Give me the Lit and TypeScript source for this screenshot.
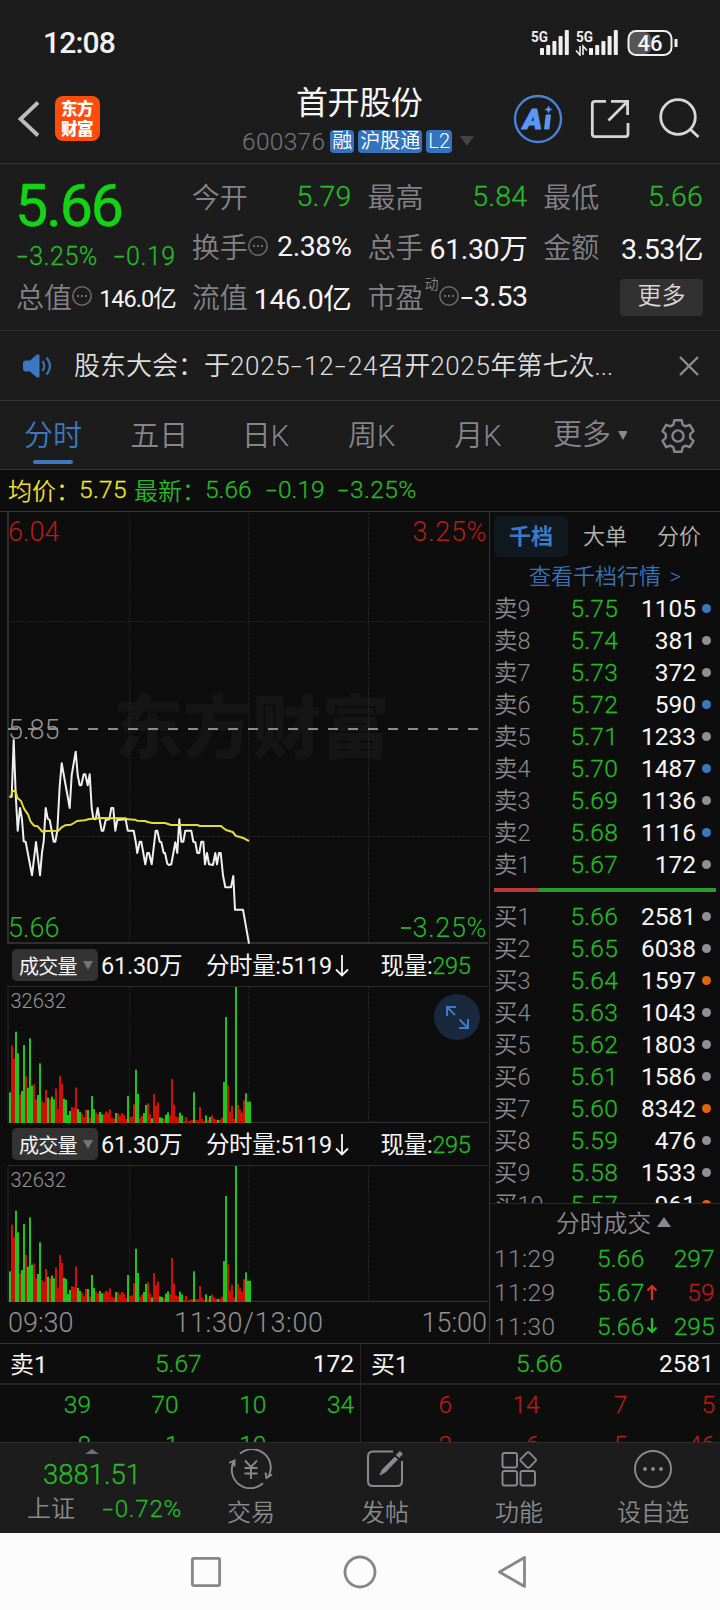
import { LitElement, html, svg, css } from "lit";
import { customElement, property } from "lit/decorators.js";

/** Splits a string so every minus sign can be drawn wide, as in the market data typeface. */
const num = (s: string) =>
  s.split("-").map((part, i) => (i === 0 ? part : html`<span class="hy">-</span>${part}`));

const shared = css`
  * { box-sizing: border-box; }
  .hy { display: inline-block; width: 0.53em; text-align: center; transform: scaleX(1.55); }
  .g { color: #26b926; -webkit-text-stroke: 0.3px currentColor; }
  .r { color: #b51c14; -webkit-text-stroke: 0.3px currentColor; }
  .w { color: #f6f6f6; font-weight: 400; }
  .w .g { font-weight: 350; }
  .y { color: #f0e030; }
  .d { color: #89898d; }
`;

type Level = [string, string, string, string];
const ASKS: Level[] = [
  ["卖9", "5.75", "1105", "blue"], ["卖8", "5.74", "381", "gray"], ["卖7", "5.73", "372", "gray"],
  ["卖6", "5.72", "590", "blue"], ["卖5", "5.71", "1233", "gray"], ["卖4", "5.70", "1487", "blue"],
  ["卖3", "5.69", "1136", "gray"], ["卖2", "5.68", "1116", "blue"], ["卖1", "5.67", "172", "gray"],
];
const BIDS: Level[] = [
  ["买1", "5.66", "2581", "gray"], ["买2", "5.65", "6038", "gray"], ["买3", "5.64", "1597", "orange"],
  ["买4", "5.63", "1043", "gray"], ["买5", "5.62", "1803", "gray"], ["买6", "5.61", "1586", "gray"],
  ["买7", "5.60", "8342", "orange"], ["买8", "5.59", "476", "gray"], ["买9", "5.58", "1533", "gray"],
  ["买10", "5.57", "961", "orange"],
];

/* Chart samples, in thirds of a pixel. */
const PRICE = [
  29,887,35,887,41,717,47,880,53,989,60,921,66,955,71,1021,77,1023,96,1123,108,1023,120,1123,126,1055,131,1021,
  137,921,143,953,149,957,155,989,161,1022,166,1022,172,989,179,855,185,787,209,921,215,822,227,752,233,822,
  239,853,244,853,251,820,256,820,263,853,269,820,275,921,280,953,287,955,293,921,299,957,305,989,310,989,
  317,957,328,955,334,921,340,921,346,989,352,957,377,955,383,989,401,989,407,1022,412,1056,419,1022,424,1022,
  436,1090,442,1056,447,1056,455,1090,467,989,472,989,479,1022,484,1024,491,1056,495,1056,502,1088,507,1092,
  514,1090,526,1024,532,1056,538,955,544,1022,550,1022,556,989,574,989,580,1022,586,1024,592,1056,598,1056,
  604,1022,610,1022,615,1090,621,1056,627,1090,639,1092,646,1056,651,1090,657,1056,662,1056,669,1123,676,1159,
  693,1159,700,1125,705,1226,729,1226,747,1328,
];
const AVG = [
  28,887,34,887,37,870,46,870,53,892,63,900,71,921,78,932,84,940,91,960,97,968,103,974,113,976,119,983,125,990,
  131,993,137,990,175,989,185,979,195,973,213,971,222,966,231,960,254,958,265,955,275,953,300,951,377,952,
  383,955,405,956,411,959,435,960,443,963,457,966,495,966,513,972,592,972,600,975,663,975,669,980,678,987,
  698,993,708,1005,723,1009,732,1012,747,1020,
];
/* Minute volumes: positive rose green, negative red. */
const VOLUME = [
  92,-232,-194,274,209,-86,96,234,-141,106,254,112,-116,-71,84,179,-66,-61,-99,76,-71,79,71,-104,-43,-141,-118,
  73,69,24,36,-48,-45,-106,42,33,-28,-18,-39,39,-16,81,42,-31,-26,33,26,-26,-34,-31,-41,-16,-13,30,-29,-22,-30,
  -25,-12,81,-18,-20,-56,160,87,-16,-22,30,54,-59,-26,14,-87,-51,-62,17,15,-12,25,32,-23,-132,-55,-19,-17,31,23,
  -6,-18,-5,-7,-9,92,-9,-8,-48,-13,-6,23,-10,18,-23,-13,-10,9,-10,-16,123,318,-113,-34,-52,-13,408,-54,-41,-31,
  -68,89,64,64,
];
const path = (a: number[]) => {
  let s = "";
  for (let i = 0; i < a.length; i += 2) s += `${(a[i] / 3).toFixed(1)},${(a[i + 1] / 3 - 11).toFixed(1)} `;
  return s;
};

@customElement("price-chart")
class PriceChart extends LitElement {
  static styles = css`
    :host { display: block; height: 432px; }
    svg { display: block; }
    text { font: 350 27px Roboto, "Noto Sans CJK SC", sans-serif; }
    .mark { font: 900 69px "Noto Sans CJK SC", sans-serif; fill: #151515; }
    .dot { stroke: #353535; stroke-width: 1; stroke-dasharray: 1 1.5; }
    .edge { stroke: #2e2e2e; stroke-width: 2; }
  `;
  render() {
    return html`<svg width="489" height="432" viewBox="0 0 489 432" fill="none">
      <text class="mark" x="114" y="241">东方财富</text>
      ${[129.5, 249, 368.5].map((x) => svg`<path class="dot" d="M${x} 1V431" />`)}
      ${[109.5, 324.5].map((y) => svg`<path class="dot" d="M8 ${y}H488" />`)}
      <path class="edge" d="M8 0V431H488" />
      <path d="M8 217H479" stroke="#8c8c8c" stroke-width="2" stroke-dasharray="10 10" />
      <polyline points=${path(PRICE)} stroke="#f0f0f0" stroke-width="2" stroke-linejoin="round" />
      <polyline points=${path(AVG)} stroke="#e8da3c" stroke-width="2" stroke-linejoin="round" />
      <text x="8" y="29" fill="#b51c14">6.04</text>
      <text x="8" y="227" fill="#949494">5.85</text>
      <text x="8" y="424.5" fill="#26b926">5.66</text>
      <text x="486.5" y="29" fill="#b51c14" text-anchor="end" textLength="74">3.25%</text>
      <path d="M401 416H411" stroke="#26b926" stroke-width="1.8" />
      <text x="486.5" y="424.5" fill="#26b926" text-anchor="end" textLength="74">3.25%</text>
    </svg>`;
  }
}

@customElement("volume-chart")
class VolumeChart extends LitElement {
  @property({ type: Boolean }) expand = false;
  static styles = [shared, css`
    :host { display: block; height: 179px; position: relative; }
    .legend { height: 42px; display: flex; align-items: center; padding: 0 0 2px 12px; font-size: 23.5px; white-space: pre; }
    .pick { width: 86px; height: 32px; border-radius: 5px; background: #333; display: flex; align-items: center;
      padding-left: 7px; gap: 6px; font-size: 20px; letter-spacing: -0.8px; margin: 2px 3px 0 0; }
    .pick svg { flex: none; }
    .total { width: 105px; letter-spacing: -0.2px; }
    .minute { width: 174.5px; letter-spacing: -0.4px; }
    .now { letter-spacing: -0.3px; }
    .arr { display: inline-block; margin-left: 3px; vertical-align: -3px; }
    .plot { display: block; }
    .plot text { font: 350 20px Roboto, sans-serif; }
    .dot { stroke: #353535; stroke-width: 1; stroke-dasharray: 1 1.5; }
    .fab { position: absolute; left: 434px; top: 50px; }
  `];
  render() {
    return html`
      <div class="legend w">
        <div class="pick">成交量<svg width="10" height="9"><path d="M0 0H10L5 9Z" fill="#737373" /></svg></div>
        <span class="total">61.30万</span>
        <span class="minute">分时量:5119<svg class="arr" width="14" height="23" viewBox="0 0 14 23" fill="none" stroke="#f6f6f6" stroke-width="1.8"><path d="M7 1V21M1 15.5L7 21.5L13 15.5" /></svg></span>
        <span class="now">现量:<span class="g">295</span></span>
      </div>
      <svg class="plot" width="489" height="137" viewBox="0 0 489 137" fill="none">
        ${[129.5, 249, 368.5].map((x) => svg`<path class="dot" d="M${x} 1V136" />`)}
        <path d="M8 137V0.5H488" stroke="#2b2b2b" />
        <path d="M8 136.5H488" stroke="#2e2e2e" stroke-width="1.6" />
        ${VOLUME.map((v, i) => svg`<rect x=${9 + i * 2} y=${137 - Math.abs(v) / 3} width="2"
          height=${Math.abs(v) / 3} fill=${v > 0 ? "#1fc41c" : "#d01008"} />`)}
        <text x="10.5" y="22" fill="#979797">32632</text>
      </svg>
      ${this.expand ? html`<svg class="fab" width="46" height="46" viewBox="0 0 46 46" fill="none" stroke="#3d7bc6" stroke-width="2">
        <circle cx="23" cy="23" r="23" fill="#18293d" stroke="none" />
        <path d="M13 22V13H22M13 13L21 21M34 25V34H25M34 34L25.5 25.5" /></svg>` : null}`;
  }
}

@customElement("order-book")
class OrderBook extends LitElement {
  static styles = [shared, css`
    :host { display: block; width: 231px; height: 832px; border-left: 1px solid #333; font-size: 24.5px; }
    .tabs { display: flex; padding: 4px 0 0 4px; height: 45px; font-size: 22px; color: #b4b4b4; }
    .tabs div { width: 74px; height: 41px; line-height: 41px; text-align: center; }
    .tabs .on { color: #3d7bc6; font-weight: 700; background: #101820; border-radius: 6px; }
    .link { height: 36px; line-height: 39px; padding-left: 39px; font-size: 22px; color: #3a72b8; white-space: nowrap; }
    .link span { margin-left: 3px; }
    .book { height: 611px; overflow: hidden; border-bottom: 1px solid #292929; }
    .row { display: flex; align-items: center; height: 32px; padding-left: 4px; line-height: 32px; }
    .name { width: 76.5px; white-space: nowrap; font-size: 23.5px; padding-bottom: 1px; }
    .price { width: 54.5px; }
    .price, .p { letter-spacing: 0.2px; }
    .vol { width: 71px; text-align: right; }
    .row i { width: 9px; height: 9px; border-radius: 50%; margin: 0 0 2px 5.5px; }
    .blue { background: #3a78c2; }
    .gray { background: #909094; }
    .orange { background: #e0640f; }
    .ratio { display: block; margin: 7px 0 9px 4px; }
    .ticks { height: 37px; display: flex; align-items: center; justify-content: center; gap: 6px; font-size: 23.8px; padding-left: 17px; padding-bottom: 2px; }
    .tick { height: 34px; display: flex; align-items: center; padding-left: 4px; }
    .tick .t { width: 103px; letter-spacing: 0.4px; }
    .tick .p { width: 49px; }
    .tick svg { width: 12px; }
    .tick .v { width: 56.5px; text-align: right; }
  `];
  private row = ([n, p, v, c]: Level) => html`<div class="row">
    <span class="name d">${n}</span><span class="price g">${p}</span><span class="vol w">${v}</span><i class=${c}></i></div>`;
  private tick = (t: string, p: string, v: string, cls: string, dir: number) => html`<div class="tick">
    <span class="t d">${t}</span><span class="p g">${p}</span>
    <svg width="12" height="18" viewBox="0 0 12 18" fill="none" stroke-width="2.2" stroke=${dir > 0 ? "#d93025" : "#1fc41c"}>
      ${dir ? svg`<path d=${dir > 0 ? "M6 17V3M1.5 7.5L6 3L10.5 7.5" : "M6 1V15M1.5 10.5L6 15L10.5 10.5"} />` : null}</svg>
    <span class="v ${cls}">${v}</span></div>`;
  render() {
    return html`
      <div class="tabs"><div class="on">千档</div><div>大单</div><div>分价</div></div>
      <div class="link">查看千档行情 <span>&gt;</span></div>
      <div class="book">
        ${ASKS.map(this.row)}
        <svg class="ratio" width="222" height="4"><path d="M0 0H45L42 4H0Z" fill="#b83b3b" /><path d="M45 0H222V4H42Z" fill="#2a9a2a" /></svg>
        ${BIDS.map(this.row)}
      </div>
      <div class="ticks d">分时成交<svg width="14" height="10"><path d="M0 10H14L7 0Z" fill="#89898d" /></svg></div>
      ${this.tick("11:29", "5.66", "297", "g", 0)}
      ${this.tick("11:29", "5.67", "59", "r", 1)}
      ${this.tick("11:30", "5.66", "295", "g", -1)}`;
  }
}

const info = html`<svg class="info" width="20" height="20" viewBox="0 0 20 20" fill="none" stroke="#6c6c70" stroke-width="1.5">
  <circle cx="10" cy="10" r="9.2" /><path d="M5 10H7M9 10H11M13 10H15" stroke-width="2" /></svg>`;

const bars = (x: number) => [7, 10, 14, 19, 25].map((h, i) =>
  svg`<rect x=${x + i * 6.2} y=${25 - h} width="4" height=${h} rx="0.8" fill="#f0f0f0" />`);

@customElement("app-root")
class AppRoot extends LitElement {
  static styles = [shared, css`
    :host { display: block; width: 720px; height: 1610px; overflow: hidden; background: #0d0d0d;
      font-family: Roboto, "Noto Sans CJK SC", sans-serif; font-weight: 350; }
    .top { background: #1c1c1c; }
    .status { height: 75px; display: flex; align-items: center; justify-content: space-between; padding: 10px 41px 0 43px;
      color: #f2f2f2; font-size: 30px; font-weight: 500; letter-spacing: -0.8px; }
    .status svg text { letter-spacing: 0; }
    .nav { height: 89px; display: flex; border-bottom: 1px solid #363636; padding-left: 17px; }
    .back { margin-top: 25px; flex: none; }
    .logo { width: 45px; height: 45px; margin: 21px 0 0 15px; border-radius: 8px; background: #ff4c0a; color: #fff;
      font: 900 16.5px/20px "Noto Sans CJK SC", sans-serif; padding: 2px 0 0 6px; letter-spacing: -0.5px; flex: none; }
    .title { width: 240px; margin-left: 141px; flex: none; }
    .name { height: 51px; line-height: 57px; padding-left: 55px; font-size: 32px; letter-spacing: -0.4px; white-space: nowrap; }
    .code { display: flex; align-items: center; height: 30px; gap: 4px; font-size: 24.5px; color: #77777b; }
    .code i { font-style: normal; letter-spacing: 0.3px; margin: 0 1px 0 1px; }
    .code b { height: 23px; line-height: 22px; border-radius: 4px; background: #3473bd; color: #fff; font-weight: 350;
      font-size: 20px; padding: 0 2px; white-space: nowrap; }
    .code svg { margin-left: 4px; }
    .acts { margin-left: 30px; margin-top: 18px; flex: none; }
    .quote { height: 167px; padding: 8px 17px 0; border-bottom: 1px solid #2c2c2c; display: grid;
      grid-template-columns: repeat(4, 158.7px); column-gap: 17.1px; grid-template-rows: repeat(3, 50px); font-size: 28.5px; }
    .cell { display: flex; align-items: center; white-space: nowrap; color: #838387; }
    .cell em { font-style: normal; margin-left: auto; letter-spacing: 0.2px; padding-bottom: 1px; }
    .cell .w { letter-spacing: -0.4px; }
    .cell .lab { font-size: 28px; padding-bottom: 3px; margin-left: -1px; }
    .cell .sm { font-size: 23.5px; letter-spacing: -1px; }
    .info { margin: 0 0 3px 0; flex: none; }
    .big { grid-row: span 2; padding-top: 1px; }
    .last { font-size: 59px; line-height: 65px; letter-spacing: -2px; color: #14d214; font-weight: 400; margin-left: -2px; -webkit-text-stroke: 0.6px #14d214; }
    .chg { display: flex; justify-content: space-between; font-size: 25px; line-height: 38px; margin-left: -1px; }
    .chg span { letter-spacing: 0.5px; }
    .sup { font-size: 14px; align-self: flex-start; margin: 1px 0 0 1px; }
    .more { width: 83px; height: 37px; border-radius: 4px; background: #313131; color: #d8d8d8; font-size: 24px;
      line-height: 35px; text-align: center; margin-left: auto; }
    .notice { height: 70px; border-bottom: 1px solid #363636; display: flex; align-items: center; padding: 0 21px 0 22px; }
    .msg { margin-left: 21px; flex: 1; font-size: 26px; color: #dedede; white-space: nowrap; padding-bottom: 4px; }
    .msg span { letter-spacing: 0.65px; }
    .tabs { height: 69px; border-bottom: 1px solid #363636; display: flex; font-size: 29px; color: #85858a; }
    .tab { width: 106.2px; line-height: 71px; text-align: center; position: relative; }
    .tab.on { color: #3d78bf; }
    .tab.on::after { content: ""; position: absolute; left: 33px; top: 59px; width: 40px; height: 4px; border-radius: 2px; background: #3d78bf; }
    .tab.more2 { width: 96px; text-align: left; padding-left: 22px; display: flex; align-items: center; gap: 7px; white-space: nowrap; }
    .gear { margin: 17px 0 0 33px; }
    .line { height: 42px; border-bottom: 1px solid #363636; display: flex; align-items: center; padding: 0 0 2px 8px; font-size: 24.5px; white-space: nowrap; }
    .line .c { font-size: 24px; width: 71px; -webkit-text-stroke: 0; }
    .line .a { width: 55px; letter-spacing: 0.3px; -webkit-text-stroke: 0.3px currentColor; }
    .line .b { width: 60px; }
    .line .e { width: 72px; }
    .line .f { letter-spacing: 0.4px; }
    .main { display: flex; height: 832px; border-bottom: 1px solid #333; }
    .left { width: 489px; }
    .axis { height: 41px; display: flex; justify-content: space-between; align-items: center; padding: 0 2px 0 8px; font-size: 27px; color: #919191; }
    .axis span:nth-child(2) { margin-left: 3px; letter-spacing: 0.7px; }
    .queue { display: flex; height: 98px; overflow: hidden; font-size: 24.5px; }
    .side { width: 360px; }
    .side + .side { border-left: 1px solid #262626; }
    .head { height: 41px; display: flex; align-items: center; border-bottom: 2px solid #262626; padding: 0 6px 0 10px; }
    .head .hp { width: 54px; margin-left: 108px; }
    .head .hn { font-size: 24px; width: 37px; white-space: nowrap; padding-bottom: 2px; }
    .head .hv { margin-left: auto; }
    .qr { display: grid; grid-template-columns: 91px repeat(3, 87.7px); height: 40px; line-height: 39px; text-align: right; }
    .foot { height: 91px; background: #1c1c1c; border-top: 1px solid #2c2c2c; display: flex; font-size: 24px; color: #8a8a8e; }
    .index { width: 184px; display: flex; flex-direction: column; align-items: center; padding-top: 6px; }
    .index .v { font-size: 27.5px; line-height: 34px; margin: 4px 0 0 0; }
    .index .s { display: flex; gap: 27px; line-height: 34px; padding-left: 27px; width: 184px; white-space: nowrap; }
    .index .s .g { letter-spacing: 0.8px; }
    .item { width: 134px; display: flex; flex-direction: column; align-items: center; padding-top: 6px; line-height: 48px; white-space: nowrap; }
    .item svg { flex: none; }
    .sys { height: 78px; background: #fcfcfc; }
  `];

  private cell(label: unknown, value: string, cls: string, small = false) {
    return html`<div class="cell"><span class="lab">${label}</span>${value.startsWith("!") ? info : null}
      <em class="${cls} ${small ? "sm" : ""}">${num(value.replace("!", ""))}</em></div>`;
  }
  private side(n: string, p: string, v: string, cls: string, a: string[], b: string[]) {
    return html`<div class="side">
      <div class="head"><span class="hn w">${n}</span><span class="hp g">${p}</span><span class="hv w">${v}</span></div>
      <div class="qr ${cls}">${a.map((x) => html`<span>${x}</span>`)}</div>
      <div class="qr ${cls}">${b.map((x) => html`<span>${x}</span>`)}</div></div>`;
  }
  render() {
    return html`
      <div class="top">
        <div class="status"><span>12:08</span>
          <svg width="148" height="26" viewBox="0 0 148 26" fill="none">
            <text x="0" y="11.5" font-size="15" font-weight="700" fill="#f0f0f0" textLength="17" lengthAdjust="spacingAndGlyphs">5G</text>
            ${bars(9)}
            <text x="45" y="11.5" font-size="15" font-weight="700" fill="#f0f0f0" textLength="17" lengthAdjust="spacingAndGlyphs">5G</text>
            <path d="M49 16V25L45 20.5M52 25V16L56 20.5" stroke="#f0f0f0" stroke-width="1.6" />
            ${bars(58)}
            <rect x="98" y="2" width="22" height="22" rx="6" fill="#555" />
            <rect x="97.5" y="1" width="43" height="24" rx="7.5" stroke="#f0f0f0" stroke-width="2" />
            <path d="M145 9V17" stroke="#f0f0f0" stroke-width="3" />
            <text x="119" y="20.5" font-size="22" font-weight="500" fill="#f4f4f4" text-anchor="middle">46</text>
          </svg>
        </div>
        <div class="nav">
          <svg class="back" width="23" height="38" viewBox="0 0 23 38" fill="none" stroke="#bdbdbd" stroke-width="3.8"><path d="M21 2.5L3.5 19L21 35.5" /></svg>
          <div class="logo">东方<br />财富</div>
          <div class="title">
            <div class="name w">首开股份</div>
            <div class="code"><i>600376</i><b>融</b><b>沪股通</b><b>L2</b><svg width="14" height="10"><path d="M0 0H14L7 10Z" fill="#444" /></svg></div>
          </div>
          <svg class="acts" width="208" height="52" viewBox="512 93 208 52" fill="none">
            <circle cx="539" cy="119" r="23" stroke="#4a83dc" stroke-width="2.4" />
            <g fill="#5a96f5" stroke="#5a96f5" stroke-linejoin="round">
              <text x="524" y="128.5" font-family="Roboto" font-size="28" font-weight="900" font-style="italic" textLength="19" lengthAdjust="spacingAndGlyphs" stroke-width="1">A</text>
              <path d="M547.5 115.5H551L549.6 128.5H546Z" stroke-width="1.8" />
              <path d="M549.5 105.5L550.8 108.2L553.5 109.5L550.8 110.8L549.5 113.5L548.2 110.8L545.5 109.5L548.2 108.2Z" stroke="none" />
            </g>
            <g stroke="#d6d6d6" stroke-width="2.8">
              <path d="M607 101.3H596Q593.3 101.3 593.3 104V134Q593.3 136.7 596 136.7H626.5Q629 136.7 629 134V123M612 101.3H628.6V115M628 102L609.5 120.5" />
              <circle cx="679" cy="117" r="17.3" /><path d="M691.5 129.5L699.5 137" />
            </g>
          </svg>
        </div>
        <div class="quote">
          <div class="big"><div class="last">5.66</div><div class="chg g"><span>${num("-3.25%")}</span><span>${num("-0.19")}</span></div></div>
          ${this.cell("今开", "5.79", "g")}${this.cell("最高", "5.84", "g")}${this.cell("最低", "5.66", "g")}
          ${this.cell("换手", "!2.38%", "w")}${this.cell("总手", "61.30万", "w")}${this.cell("金额", "3.53亿", "w")}
          ${this.cell("总值", "!146.0亿", "w", true)}${this.cell("流值", "146.0亿", "w")}
          <div class="cell"><span class="lab">市盈</span><span class="sup">动</span>${info}<em class="w">${num("-3.53")}</em></div>
          <div class="cell"><div class="more">更多</div></div>
        </div>
        <div class="notice">
          <svg width="31" height="26" viewBox="0 0 31 26" fill="none"><path d="M4 7.5H8L14.5 1.8Q17.5 0.5 17.5 3V23Q17.5 25.5 14.5 24.2L8 18.5H4Q1 18.5 1 15.5V10.5Q1 7.5 4 7.5Z" fill="#3a78c4" />
            <path d="M20.5 8Q24 13 20.5 18M24.5 4.5Q31.5 13 24.5 21.5" stroke="#3a6fae" stroke-width="2.2" /></svg>
          <div class="msg">股东大会：于<span>${num("2025-12-24")}</span>召开<span>2025</span>年第七次...</div>
          <svg width="20" height="20" viewBox="0 0 20 20" stroke="#8d8d8d" stroke-width="2.4"><path d="M1 1L19 19M19 1L1 19" /></svg>
        </div>
        <div class="tabs">
          <div class="tab on">分时</div><div class="tab">五日</div><div class="tab">日K</div><div class="tab">周K</div><div class="tab">月K</div>
          <div class="tab more2">更多<svg width="10" height="9"><path d="M0 0H10L5 9Z" fill="#8a8a8e" /></svg></div>
          <svg class="gear" width="36" height="36" viewBox="-18 -18 36 36" fill="none" stroke="#85858a" stroke-width="2.4" stroke-linejoin="round">
            <path d="M-3.7 -15.8H3.7L4.6 -11.4L7.6 -9.6L11.8 -11.2L15.5 -4.8L12.2 -1.9V1.9L15.5 4.8L11.8 11.2L7.6 9.6L4.6 11.4L3.7 15.8H-3.7L-4.6 11.4L-7.6 9.6L-11.8 11.2L-15.5 4.8L-12.2 1.9V-1.9L-15.5 -4.8L-11.8 -11.2L-7.6 -9.6L-4.6 -11.4Z" />
            <circle r="5.6" /></svg>
        </div>
      </div>
      <div class="line"><span class="c y">均价：</span><span class="y a">5.75</span><span class="c g">最新：</span>
        <span class="g b">5.66</span><span class="g e">${num("-0.19")}</span><span class="g f">${num("-3.25%")}</span></div>
      <div class="main">
        <div class="left">
          <price-chart></price-chart>
          <volume-chart expand></volume-chart>
          <volume-chart></volume-chart>
          <div class="axis"><span>09:30</span><span>11:30/13:00</span><span>15:00</span></div>
        </div>
        <order-book></order-book>
      </div>
      <div class="queue">
        ${this.side("卖1", "5.67", "172", "g", ["39", "70", "10", "34"], ["8", "1", "10", ""])}
        ${this.side("买1", "5.66", "2581", "r", ["6", "14", "7", "5"], ["2", "6", "5", "46"])}
      </div>
      <div class="foot">
        <div class="index"><svg width="14" height="5"><path d="M0 5H14L7 0Z" fill="#6f6f73" /></svg>
          <div class="v g">3881.51</div><div class="s"><span>上证</span><span class="g">${num("-0.72%")}</span></div></div>
        <div class="item"><svg width="44" height="40" viewBox="-22 -20 44 40" fill="none" stroke="#8a8a8e" stroke-width="1.9">
          <path d="M-11 -15.2A18.5 18.5 0 0 1 17.5 7.5M21 5.5L15.5 9L14.5 3.5M12 14.2A18.5 18.5 0 0 1 -17 -8M-22 -6L-16.5 -8.5V-2.5" />
          <path d="M-6 -8.5L0 -2L6 -8.5M-6.5 -1H6.5M-6.5 4.5H6.5M0 -2V10" /></svg>交易</div>
        <div class="item"><svg width="40" height="40" viewBox="-20 -20 40 40" fill="none" stroke="#8a8a8e" stroke-width="2">
          <path d="M8 -17.5H-12Q-17 -17.5 -17 -12.5V12Q-17 17 -12 17H12Q17 17 17 12V-8" /><path d="M-5 6L-2.5 0.5L10 -12L12.5 -9.5L0.5 3Z" fill="#8a8a8e" stroke-width="1" /><path d="M12.5 -12.5L16.5 -16.5" stroke-width="4.4" /></svg>发帖</div>
        <div class="item"><svg width="40" height="40" viewBox="-20 -20 40 40" fill="none" stroke="#8a8a8e" stroke-width="1.9">
          <rect x="-16.5" y="-16" width="14.5" height="14.5" rx="2" /><rect x="-16.5" y="2" width="14.5" height="14.5" rx="2" /><rect x="1.5" y="2" width="14.5" height="14.5" rx="2" />
          <rect x="-6" y="-6" width="12" height="12" rx="2" transform="translate(9.2 -9) rotate(45)" /></svg>功能</div>
        <div class="item"><svg width="40" height="40" viewBox="-20 -20 40 40" fill="none" stroke="#8a8a8e" stroke-width="1.9">
          <circle r="18" /><g fill="#8a8a8e" stroke="none"><circle cx="-8" r="2" /><circle r="2" /><circle cx="8" r="2" /></g></svg>设自选</div>
      </div>
      <div class="sys"><svg width="720" height="78" viewBox="0 0 720 78" fill="none" stroke="#878787" stroke-width="2.8" stroke-linejoin="round">
        <rect x="192.4" y="25.4" width="27.2" height="27.2" rx="1" /><circle cx="360" cy="39" r="15" /><path d="M524.5 24.5V53.5L499.5 39Z" /></svg></div>`;
  }
}
